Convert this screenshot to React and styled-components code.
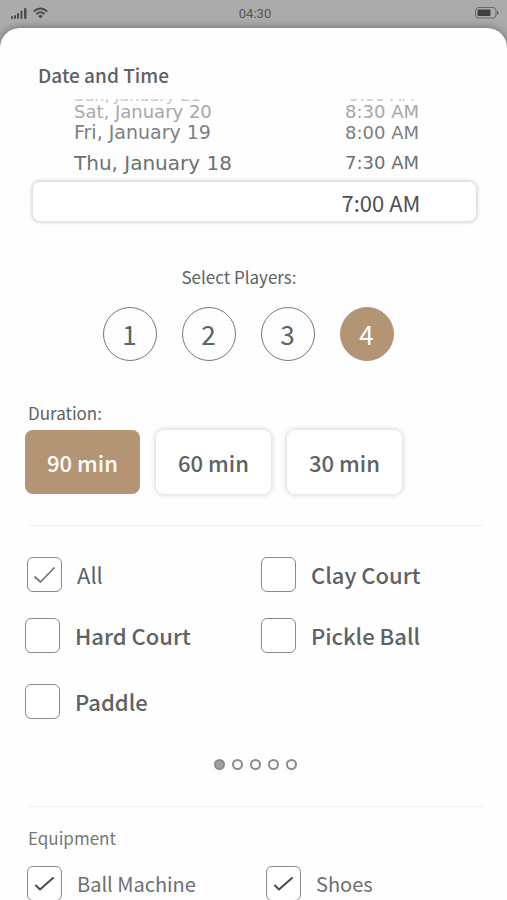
import React, { useState } from "react";
import styled, { createGlobalStyle } from "styled-components";

const ink = "#5d6264";
const tan = "#b39575";

const GlobalStyle = createGlobalStyle`
  * { box-sizing: border-box; }
  body {
    margin: 0;
    background: #ababab;
    color: ${ink};
    font-family: "Noto Sans CJK SC", "Noto Sans", sans-serif;
  }
  button, input { font: inherit; color: inherit; }
`;

const StatusBar = styled.header`
  display: grid;
  grid-template-columns: 1fr auto 1fr;
  align-items: center;
  height: 28px;
  padding: 0 8px 2px 11px;
  color: #555;
  font-family: Roboto, sans-serif;
  font-size: 13px;
`;

const StatusIcons = styled.div`
  display: flex;
  align-items: center;
  gap: 6px;
  justify-content: ${(p) => (p.$end ? "flex-end" : "flex-start")};
`;

const Sheet = styled.main`
  min-height: calc(100vh - 28px);
  padding: 32px 22px 24px 25px;
  overflow: hidden;
  background: #fefefe;
  border-radius: 20px 20px 0 0;
  box-shadow: 0 0 8px rgba(0, 0, 0, 0.4);
`;

const Title = styled.h1`
  margin: 0;
  padding-left: 13px;
  font-size: 19px;
  font-weight: 500;
  line-height: 30px;
`;

const Picker = styled.section`
  padding: 9px 8px 0 7px;
`;

const Wheels = styled.div`
  display: grid;
  grid-template-columns: 1fr 190px;
  height: 80px;
  overflow: hidden;
`;

const Wheel = styled.ul`
  display: flex;
  flex-direction: column;
  justify-content: flex-end;
  align-items: ${(p) => (p.$time ? "center" : "flex-start")};
  min-height: 0;
  margin: 0;
  padding: 0 0 0 ${(p) => (p.$time ? "0" : "42px")};
  list-style: none;
  font-family: "DejaVu Sans", sans-serif;
`;

const wheelRows = [
  { height: 32, line: 32, date: 20, time: 18, color: "#6c7072" },
  { height: 25, line: 21, date: 19, time: 18, color: "#7c7f81" },
  { height: 20, line: 20, date: 18, time: 18, color: "#a6a8a9" },
  { height: 12, line: 12, date: 16, time: 16, color: "#c4c6c6" },
];

const WheelRow = styled.li`
  flex: none;
  height: ${(p) => wheelRows[p.$depth].height}px;
  line-height: ${(p) => wheelRows[p.$depth].line}px;
  font-size: ${(p) => wheelRows[p.$depth][p.$kind]}px;
  color: ${(p) => wheelRows[p.$depth].color};
  white-space: nowrap;
`;

const Selection = styled.div`
  display: grid;
  grid-template-columns: 1fr 190px;
  align-items: center;
  height: 41px;
  margin-top: 2px;
  background: #fff;
  border: 1px solid #e2e2e2;
  border-radius: 8px;
  box-shadow: 0 0 3px 1px rgba(0, 0, 0, 0.14);
  color: #4e5153;
  font-size: 22px;
  line-height: 32px;
  text-align: center;
`;

const Players = styled.section`
  padding: 42px 20px 0 6px;
`;

const SectionLabel = styled.h2`
  margin: 0;
  padding: 0 ${(p) => (p.$center ? "18px" : "0")} 0 ${(p) => (p.$center ? "0" : "3px")};
  font-size: 17px;
  font-weight: 400;
  line-height: 26px;
  text-align: ${(p) => (p.$center ? "center" : "left")};
`;

const PlayerRow = styled.div`
  display: flex;
  justify-content: center;
  gap: 25px;
  padding-top: 17px;
`;

const PlayerButton = styled.button`
  width: 54px;
  height: 54px;
  padding: 0 0 1px;
  border: 1px solid ${(p) => (p.$active ? tan : "#75797b")};
  border-radius: 50%;
  background: ${(p) => (p.$active ? tan : "transparent")};
  color: ${(p) => (p.$active ? "#fff" : ink)};
  font-size: 26px;
  line-height: 52px;
`;

const Duration = styled.section`
  padding-top: 39px;
`;

const DurationRow = styled.div`
  display: flex;
  gap: 16px;
  padding-top: 4px;
`;

const DurationButton = styled.button`
  width: 115px;
  height: 64px;
  padding: 0;
  border: 0;
  border-radius: 8px;
  background: ${(p) => (p.$active ? tan : "#fff")};
  color: ${(p) => (p.$active ? "#fff" : ink)};
  box-shadow: ${(p) => (p.$active ? "none" : "0 0 5px 1px rgba(0, 0, 0, 0.16)")};
  font-size: 22px;
  font-weight: 500;
  line-height: 64px;
`;

const Divider = styled.hr`
  height: 1px;
  margin: ${(p) => p.$top}px 1px 0 3px;
  border: 0;
  background: #f1f1f1;
`;

const CourtGrid = styled.div`
  display: grid;
  grid-template-columns: 236px 1fr;
  grid-template-rows: 61px 66px 35px;
  align-items: start;
  margin-top: 31px;
`;

const EquipmentTitle = styled(SectionLabel)`
  margin-top: 18px;
  color: #74787a;
`;

const EquipmentGrid = styled.div`
  display: grid;
  grid-template-columns: 239px 1fr;
  align-items: start;
  padding-top: 15px;
`;

const Option = styled.label`
  display: flex;
  align-items: center;
  gap: 15px;
  padding-left: ${(p) => (p.$strong ? 0 : 2)}px;
  font-size: ${(p) => (p.$dark ? 20 : 22)}px;
  font-weight: ${(p) => (p.$strong ? 500 : 400)};
  color: ${(p) => (p.$dark ? "#6c7072" : ink)};
  line-height: 35px;
  white-space: nowrap;
`;

const BoxWrap = styled.span`
  display: grid;
  flex: none;
  width: 35px;
  height: 35px;
  > * { grid-area: 1 / 1; }
`;

const BoxInput = styled.input`
  appearance: none;
  width: 35px;
  height: 35px;
  margin: 0;
  border: 1px solid #8b8b8b;
  border-radius: 6px;
  background: #fff;
  & + svg { visibility: hidden; pointer-events: none; }
  &:checked + svg { visibility: visible; }
`;

const Dots = styled.nav`
  display: flex;
  justify-content: center;
  gap: 7px;
  padding-top: 40px;
`;

const Dot = styled.button`
  width: 11px;
  height: 11px;
  padding: 0;
  border: 2px solid #8c8c8c;
  border-radius: 50%;
  background: ${(p) => (p.$active ? "#a0a0a0" : "#fff")};
`;

function CheckOption({ label, strong, defaultChecked, dark }) {
  return (
    <Option $strong={strong} $dark={dark}>
      <BoxWrap>
        <BoxInput type="checkbox" defaultChecked={defaultChecked} />
        <svg width="35" height="35" viewBox="0 0 35 35" fill="none" aria-hidden="true">
          {dark ? (
            <path d="M9 19.500l4 4L26 12" stroke="#4a4a4a" strokeWidth="2" strokeLinecap="round" strokeLinejoin="round" />
          ) : (
            <path d="M8 20l5.500 5L27 11" stroke="#777" strokeWidth="1.800" strokeLinecap="round" strokeLinejoin="round" />
          )}
        </svg>
      </BoxWrap>
      {label}
    </Option>
  );
}

function SignalIcon() {
  return (
    <svg width="16" height="12" viewBox="0 0 16 12" fill="#4c4c4c" aria-hidden="true">
      <rect x="0" y="9" width="2" height="3" rx="1" />
      <rect x="3" y="8" width="2" height="4" rx="1" />
      <rect x="6" y="6" width="2" height="6" rx="1" />
      <rect x="9.500" y="3.500" width="2" height="8.500" rx="1" />
      <rect x="13" y="1" width="2.500" height="11" rx="1" />
    </svg>
  );
}

function WifiIcon() {
  return (
    <svg width="15" height="12" viewBox="0 0 15 12" fill="none" stroke="#4c4c4c" strokeWidth="1.800" aria-hidden="true">
      <path d="M0.700 4.500Q7.500-1.500 14.300 4.500" />
      <path d="M3.200 7.200Q7.500 3.200 11.800 7.200" />
      <path d="M5 9Q7.500 7 10 9L7.500 11.500Z" fill="#4c4c4c" stroke="none" />
    </svg>
  );
}

function BatteryIcon() {
  return (
    <svg width="24" height="12" viewBox="0 0 24 12" aria-hidden="true">
      <rect x="0.500" y="0.500" width="20.500" height="10.500" rx="3" fill="none" stroke="#686868" />
      <rect x="2.500" y="2.500" width="13" height="6.500" rx="1" fill="#3e3e3e" />
      <path d="M22 3.500q3 2.300 0 4.600z" fill="#585858" />
    </svg>
  );
}

const dates = ["Sun, January 21", "Sat, January 20", "Fri, January 19", "Thu, January 18"];
const times = ["9:00 AM", "8:30 AM", "8:00 AM", "7:30 AM"];

export default function App() {
  const [players, setPlayers] = useState(4);
  const [duration, setDuration] = useState(90);
  const [page, setPage] = useState(0);

  return (
    <>
      <GlobalStyle />
      <StatusBar>
        <StatusIcons>
          <SignalIcon />
          <WifiIcon />
        </StatusIcons>
        <span>04:30</span>
        <StatusIcons $end>
          <BatteryIcon />
        </StatusIcons>
      </StatusBar>
      <Sheet>
        <Title>Date and Time</Title>
        <Picker>
          <Wheels>
            <Wheel aria-label="Date">
              {dates.map((d, i) => (
                <WheelRow key={d} $kind="date" $depth={3 - i}>{d}</WheelRow>
              ))}
            </Wheel>
            <Wheel aria-label="Time" $time>
              {times.map((t, i) => (
                <WheelRow key={t} $kind="time" $depth={3 - i}>{t}</WheelRow>
              ))}
            </Wheel>
          </Wheels>
          <Selection>
            <span />
            <span>7:00 AM</span>
          </Selection>
        </Picker>

        <Players>
          <SectionLabel $center>Select Players:</SectionLabel>
          <PlayerRow>
            {[1, 2, 3, 4].map((n) => (
              <PlayerButton key={n} type="button" aria-pressed={players === n} $active={players === n} onClick={() => setPlayers(n)}>
                {n}
              </PlayerButton>
            ))}
          </PlayerRow>
        </Players>

        <Duration>
          <SectionLabel>Duration:</SectionLabel>
          <DurationRow>
            {[90, 60, 30].map((m) => (
              <DurationButton key={m} type="button" aria-pressed={duration === m} $active={duration === m} onClick={() => setDuration(m)}>
                {m} min
              </DurationButton>
            ))}
          </DurationRow>
        </Duration>

        <Divider $top={31} />

        <CourtGrid>
          <CheckOption label="All" defaultChecked />
          <CheckOption label="Clay Court" strong />
          <CheckOption label="Hard Court" strong />
          <CheckOption label="Pickle Ball" strong />
          <CheckOption label="Paddle" strong />
        </CourtGrid>

        <Dots aria-label="Court pages">
          {[0, 1, 2, 3, 4].map((i) => (
            <Dot key={i} type="button" aria-label={`Page ${i + 1}`} $active={page === i} onClick={() => setPage(i)} />
          ))}
        </Dots>

        <Divider $top={36} />

        <section>
          <EquipmentTitle>Equipment</EquipmentTitle>
          <EquipmentGrid>
            <CheckOption label="Ball Machine" defaultChecked dark />
            <CheckOption label="Shoes" defaultChecked dark />
          </EquipmentGrid>
        </section>
      </Sheet>
    </>
  );
}
